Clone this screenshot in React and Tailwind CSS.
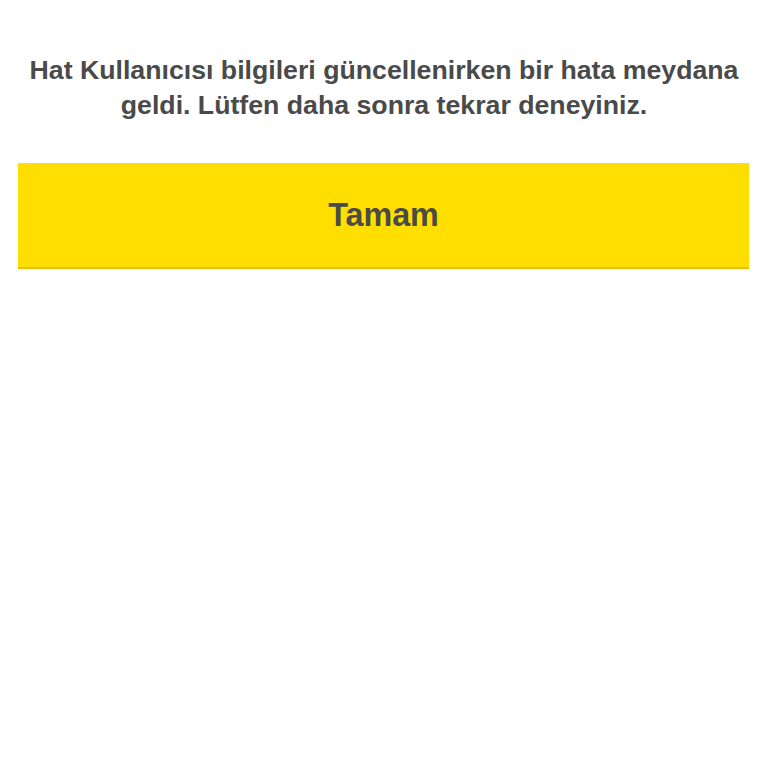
import React from "react";

const ErrorDialog = () => {
  return (
    <div className="min-h-screen bg-white font-['Liberation_Sans',Arial,sans-serif]">
      <div className="pt-[53px] px-[18px]">
        <p className="text-center text-[26.7px] leading-[35px] font-bold text-[#4a4a4a]">
          Hat Kullanıcısı bilgileri güncellenirken bir hata meydana geldi. Lütfen daha sonra tekrar deneyiniz.
        </p>
        <button
          type="button"
          className="mt-[40px] w-[731px] h-[106px] bg-[#ffde00] border-b-2 border-[#e0c400] flex items-center justify-center text-[32.3px] font-bold text-[#4a4a4a]"
        >
          Tamam
        </button>
      </div>
    </div>
  );
};

export default ErrorDialog;
